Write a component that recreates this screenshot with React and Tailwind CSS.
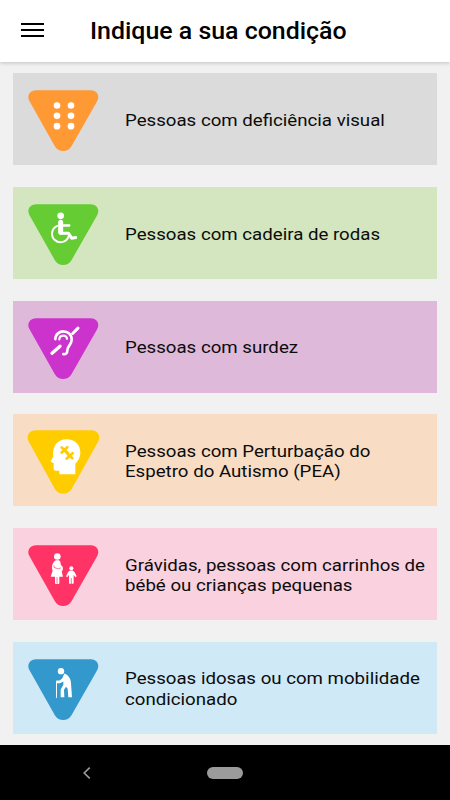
import React from "react";

const TRIANGLE =
  "M78 60H241C260 60 270 77 260 94L183 229C172 247 145 247 134 229L58 94C48 77 58 60 78 60Z";

function Braille() {
  return (
    <g fill="#fff">
      {[106, 137, 168].map((y) => (
        <React.Fragment key={y}>
          <circle cx="140" cy={y} r="10" />
          <circle cx="182" cy={y} r="10" />
        </React.Fragment>
      ))}
    </g>
  );
}

function Wheelchair() {
  return (
    <g fill="none" stroke="#fff" strokeLinecap="round" strokeLinejoin="round">
      <circle cx="151" cy="95" r="10" fill="#fff" stroke="none" />
      <path d="M151 114V144" strokeWidth="15" />
      <path d="M154 124H177" strokeWidth="7" />
      <path d="M152 147H174L184 162L196 160" strokeWidth="9" />
      <path d="M141 125A25.500 25.500 0 1 0 175 156" strokeWidth="6" />
    </g>
  );
}

function Ear() {
  return (
    <g fill="none" stroke="#fff" strokeLinecap="round" strokeLinejoin="round">
      <path d="M135 123C136 92 184 92 184 124C184 142 171 142 171 156C171 165 167 169 159 168" strokeWidth="8" />
      <path d="M147 124C147 109 170 109 170 122" strokeWidth="6.500" />
      <path d="M125 165L149 144" strokeWidth="10" />
      <path d="M187 106L203 90" strokeWidth="9" />
    </g>
  );
}

function Head() {
  return (
    <g>
      <path
        d="M147 189V179H136C131 179 130 176 130 170V156L120 151L129 137C124 105 142 84 169 84C195 84 210 102 210 123C210 139 203 149 195 158V189Z"
        fill="#fff"
      />
      <g fill="none" stroke="#fc0" strokeWidth="8" strokeLinecap="round">
        <path d="M154 109L172 125M171 108L154 124" />
        <path d="M169 125L186 141M187 126L169 142" />
      </g>
      <path d="M158 112L166 111L169 119L178 129L183 137L174 138L169 128L160 122Z" fill="#fc0" />
    </g>
  );
}

function Family() {
  return (
    <g>
      <g fill="#fff">
        <circle cx="141" cy="94" r="10" />
        <path d="M136 105H146C152 108 150 113 152 120C159 124 160 133 154 139L158 155H147V174Q144 179 141 174Q138 179 134 174V155H121L127 136C123 129 125 111 136 105Z" />
        <circle cx="183" cy="129" r="6" />
        <path d="M179 136H187C193 139 195 146 199 153L195 156L190 149V174Q187 178 183 174V160V174Q179 178 176 174V149L171 156L167 153C171 146 173 139 179 136Z" />
      </g>
      <path d="M131 121V127L144 131L152 128M183 159V175M140 156V174" fill="none" stroke="#ff3366" strokeWidth="2" />
    </g>
  );
}

function Elder() {
  return (
    <g fill="none" stroke="#fff" strokeLinecap="round" strokeLinejoin="round">
      <circle cx="152" cy="96" r="9.500" fill="#fff" stroke="none" />
      <path
        d="M162 103C172 106 182 118 182 132L185 174H174L172 149L167 143L161 152L162 174H151L151 151L159 137V127L149 132H138V124H148L156 117Z"
        fill="#fff"
        stroke="none"
      />
      <path d="M138.500 128V175" strokeWidth="3" />
    </g>
  );
}

const CONDITIONS = [
  { lines: ["Pessoas com deficiência visual"], bg: "bg-[#dbdbdb]", color: "#ff9933", Icon: Braille },
  { lines: ["Pessoas com cadeira de rodas"], bg: "bg-[#d3e6bf]", color: "#66cc33", Icon: Wheelchair },
  { lines: ["Pessoas com surdez"], bg: "bg-[#dfb9d9]", color: "#cc33cc", Icon: Ear },
  { lines: ["Pessoas com Perturbação do", "Espetro do Autismo (PEA)"], bg: "bg-[#f8dcc4]", color: "#ffcc00", Icon: Head },
  { lines: ["Grávidas, pessoas com carrinhos de", "bébé ou crianças pequenas"], bg: "bg-[#fad1df]", color: "#ff3366", Icon: Family },
  { lines: ["Pessoas idosas ou com mobilidade", "condicionado"], bg: "bg-[#cfe9f6]", color: "#3399cc", Icon: Elder },
];

function ConditionCard({ lines, bg, color, Icon }) {
  return (
    <button className={`flex h-[92px] w-full items-center text-left ${bg}`}>
      <svg width="110" height="92" viewBox="8 8.500 330 276" className="shrink-0">
        <path
          d={TRIANGLE}
          fill={color}
          transform={Icon === Head ? "translate(-3.500 -5) scale(1.024 1.04)" : undefined}
        />
        <Icon />
      </svg>
      <span className="ml-[2.500px] origin-left scale-x-[1.08] pt-[2px] text-[17.300px] leading-[20.500px] whitespace-nowrap text-[#0c0c0c]">
        {lines.map((line) => (
          <span key={line} className="block">{line}</span>
        ))}
      </span>
    </button>
  );
}

export default function App() {
  return (
    <div className="flex h-[800px] w-[450px] flex-col overflow-hidden bg-[#f1f1f1] font-[Roboto,sans-serif]">
      <header className="z-10 flex h-[62px] shrink-0 items-center bg-white pl-[21px] shadow-[0_1px_4px_rgba(0,0,0,0.2)]">
        <button className="-mt-[2px] flex w-[23px] flex-col gap-[4px]" aria-label="Menu">
          <span className="h-[2px] w-full bg-black" />
          <span className="h-[2px] w-full bg-black" />
          <span className="h-[2px] w-full bg-black" />
        </button>
        <h1 className="ml-[46px] origin-left scale-x-[1.083] pt-[2px] text-[23px] font-medium whitespace-nowrap text-black">
          Indique a sua condição
        </h1>
      </header>
      <main className="flex flex-1 flex-col gap-[21.800px] pt-[11px] pr-[13px] pl-[12.500px]">
        {CONDITIONS.map((c) => (
          <ConditionCard key={c.lines[0]} {...c} />
        ))}
      </main>
      <nav className="flex h-[55px] shrink-0 items-center bg-black pl-[83px]">
        <svg width="8" height="12" viewBox="0 0 8 12" fill="none" stroke="#9b9b9b" strokeWidth="1.600">
          <path d="M6.700 .6L1.200 6L6.700 11.400" />
        </svg>
        <span className="ml-[116px] h-[12px] w-[36px] rounded-full bg-[#9b9b9b]" />
      </nav>
    </div>
  );
}
